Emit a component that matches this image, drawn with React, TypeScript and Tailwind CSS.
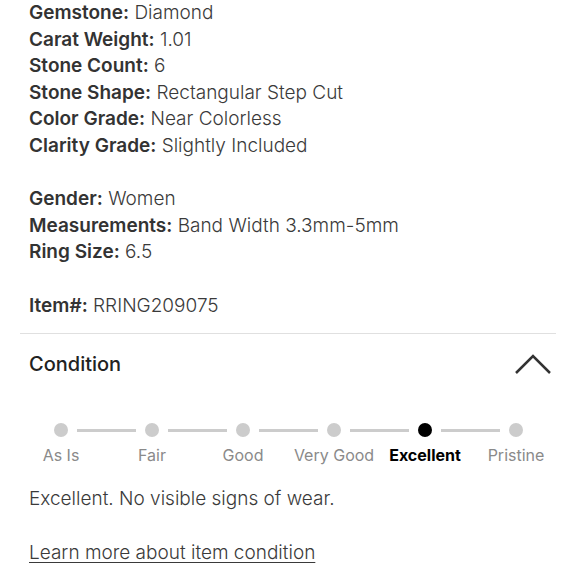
import React from "react";

const steps = ["As Is", "Fair", "Good", "Very Good", "Excellent", "Pristine"];
const current = 4;

const Row: React.FC<{ label: string; value: string }> = ({ label, value }) => (
  <div>
    <span className="font-semibold text-[#333]">{label}:</span> {value}
  </div>
);

const App: React.FC = () => {
  return (
    <div
      className="w-[580px] h-[580px] overflow-hidden bg-white text-[#3a3a3a]"
      style={{ fontFamily: "Inter, 'Liberation Sans', sans-serif" }}
    >
      <div className="pl-[29px] text-[19px] leading-[26.6px] font-light">
        <Row label="Gemstone" value="Diamond" />
        <Row label="Carat Weight" value="1.01" />
        <Row label="Stone Count" value="6" />
        <Row label="Stone Shape" value="Rectangular Step Cut" />
        <Row label="Color Grade" value="Near Colorless" />
        <Row label="Clarity Grade" value="Slightly Included" />
        <div className="h-[26.6px]" />
        <Row label="Gender" value="Women" />
        <Row label="Measurements" value="Band Width 3.3mm-5mm" />
        <Row label="Ring Size" value="6.5" />
        <div className="h-[26.6px]" />
        <Row label="Item#" value="RRING209075" />
      </div>

      <div className="ml-[20px] mr-[24px] mt-[14px] border-t border-[#e0e0e0]" />

      {/* Condition header */}
      <div className="flex items-center justify-between pl-[29px] pr-[28px] h-[60px]">
        <h2 className="text-[20px] font-medium text-[#222]">Condition</h2>
        <svg width="38" height="24" viewBox="0 0 38 24" fill="none">
          <path d="M2 21 L19 4 L36 21" stroke="#333" strokeWidth="2.5" />
        </svg>
      </div>

      {/* Condition scale */}
      <div className="mt-[29px] ml-[54px] flex items-center">
        {steps.map((s, i) => (
          <React.Fragment key={s}>
            <div
              className={
                i === current
                  ? "w-[14px] h-[14px] rounded-full bg-black"
                  : "w-[14px] h-[14px] rounded-full bg-[#cccccc]"
              }
            />
            {i < steps.length - 1 && <div className="mx-[9px] w-[59px] h-[3px] bg-[#cccccc]" />}
          </React.Fragment>
        ))}
      </div>
      <div className="ml-[15.5px] mt-[8px] grid grid-cols-6 w-[546px] text-[16px] leading-[20px]">
        {steps.map((s, i) => (
          <div
            key={s}
            className={
              i === current
                ? "text-center font-bold text-black whitespace-nowrap"
                : "text-center text-[#8a8a8a] whitespace-nowrap"
            }
          >
            {s}
          </div>
        ))}
      </div>

      <div className="pl-[29px] mt-[21px] text-[19px] leading-[26px] font-light">
        Excellent. No visible signs of wear.
      </div>
      <div className="pl-[29px] mt-[28px] text-[19px] leading-[26px] font-light">
        <a className="underline underline-offset-[3px] text-[#3a3a3a]">Learn more about item condition</a>
      </div>
    </div>
  );
};

export default App;
